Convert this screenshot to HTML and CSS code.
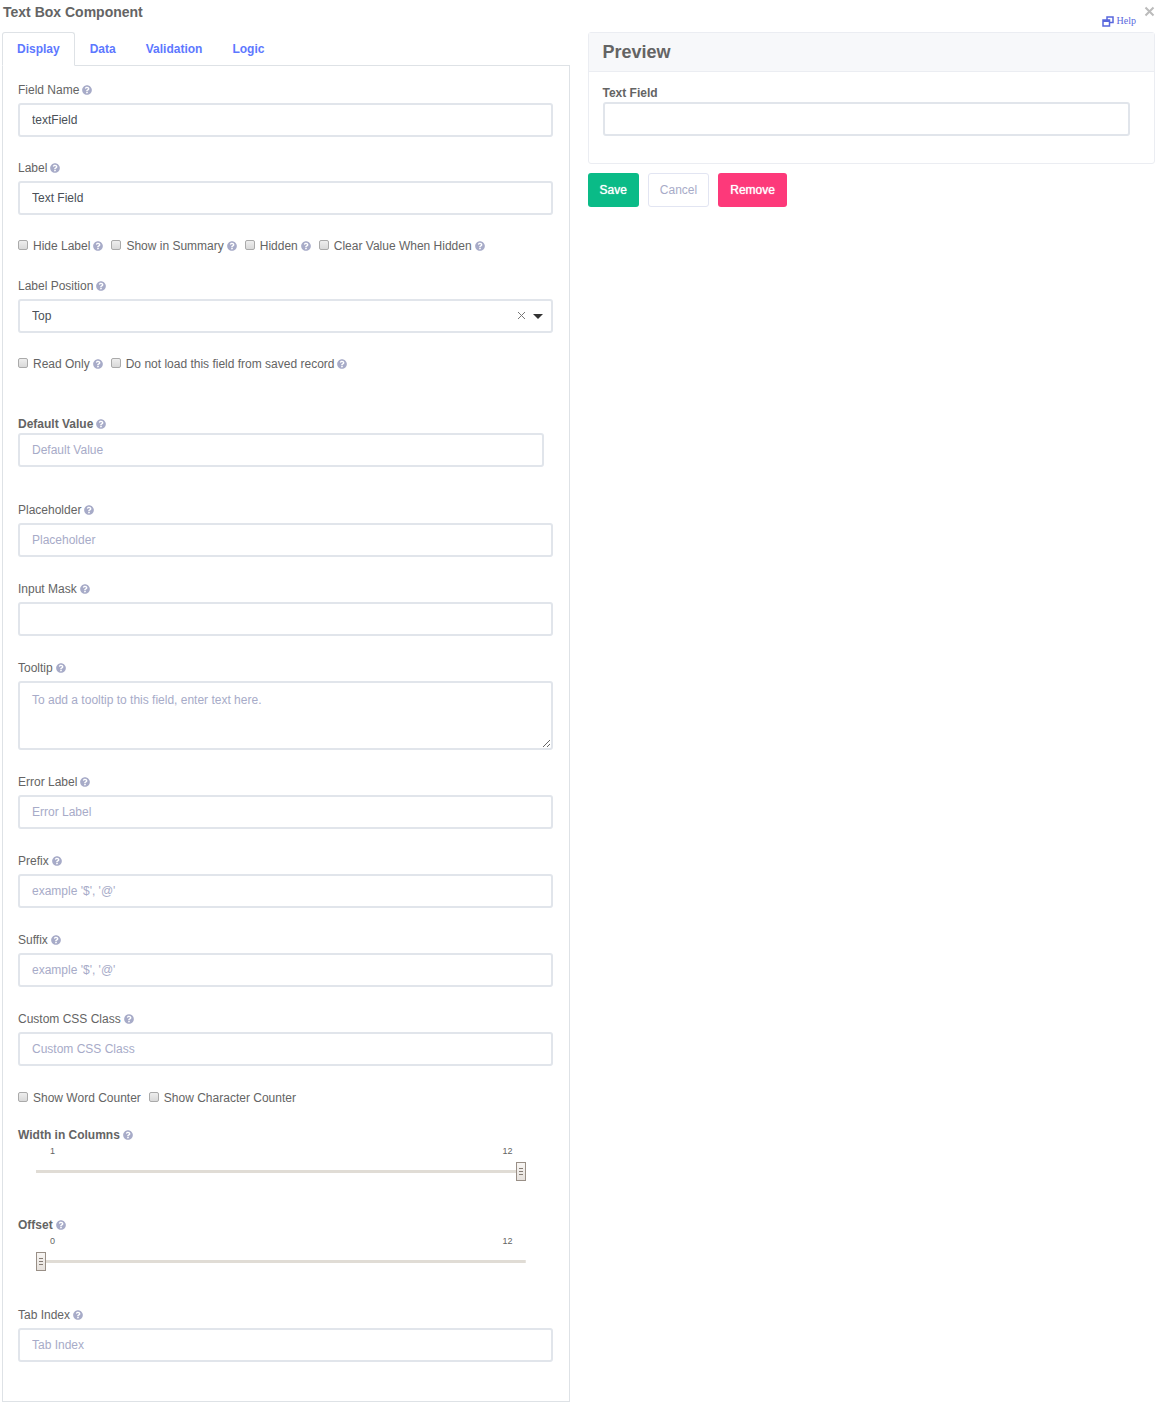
FILE: index.html
```html
<!DOCTYPE html>
<html lang="en">

<head>
    <meta charset="UTF-8">
    <meta name="viewport" content="width=device-width, initial-scale=1.0">
    <title>Text Box Component</title>
    <link rel="stylesheet" href="styles.css">
</head>

<body>
    <svg class="sprite" aria-hidden="true">
        <symbol id="question" viewBox="0 0 512 512">
            <path d="M504 256c0 136.997-111.043 248-248 248S8 392.997 8 256C8 119.083 119.043 8 256 8s248 111.083 248 248zM262.655 90c-54.497 0-89.255 22.957-116.549 63.758-3.536 5.286-2.353 12.415 2.715 16.258l34.699 26.31c5.205 3.947 12.621 3.008 16.665-2.122 17.864-22.658 30.113-35.797 57.303-35.797 20.429 0 45.698 13.148 45.698 32.958 0 14.976-12.363 22.667-32.534 33.976C247.128 238.528 216 254.941 216 296v4c0 6.627 5.373 12 12 12h56c6.627 0 12-5.373 12-12v-1.333c0-28.462 83.186-29.647 83.186-106.667 0-58.002-60.165-102-116.531-102zM256 338c-25.365 0-46 20.635-46 46 0 25.364 20.635 46 46 46s46-20.636 46-46c0-25.364-20.635-46-46-46z" />
        </symbol>
    </svg>

    <header class="dialog-header">
        <h1>Text Box Component</h1>
        <a href="#" class="help-link">
            <svg viewBox="0 0 12 11" width="12" height="11" aria-hidden="true">
                <path d="M5 3.500V1h6v5.500H8M1 4h6.500v6H1zM1 5.200h6" />
            </svg>
            Help
        </a>
        <button type="button" class="close" aria-label="Close">
            <svg viewBox="0 0 11 11" width="11" height="11" aria-hidden="true">
                <path d="M1.500 1.500l8 8M9.500 1.500l-8 8" />
            </svg>
        </button>
    </header>

    <main class="columns">
        <section class="settings">
            <nav class="tabs">
                <a href="#" class="tab active">Display</a>
                <a href="#" class="tab">Data</a>
                <a href="#" class="tab">Validation</a>
                <a href="#" class="tab">Logic</a>
            </nav>
            <form class="panel">
                <div class="group">
                    <div class="field">
                        <label for="field-name">Field Name <svg class="tip"><use href="#question" /></svg></label>
                        <input type="text" class="control" id="field-name" value="textField">
                    </div>
                    <div class="field">
                        <label for="label">Label <svg class="tip"><use href="#question" /></svg></label>
                        <input type="text" class="control" id="label" value="Text Field">
                    </div>
                    <div class="checks">
                        <label><input type="checkbox">Hide Label <svg class="tip"><use href="#question" /></svg></label>
                        <label><input type="checkbox">Show in Summary <svg class="tip"><use href="#question" /></svg></label>
                        <label><input type="checkbox">Hidden <svg class="tip"><use href="#question" /></svg></label>
                        <label><input type="checkbox">Clear Value When Hidden <svg class="tip"><use href="#question" /></svg></label>
                    </div>
                    <div class="field">
                        <label for="label-position">Label Position <svg class="tip"><use href="#question" /></svg></label>
                        <div class="select">
                            <select class="control" id="label-position">
                                <option>Top</option>
                                <option>Left</option>
                                <option>Right</option>
                                <option>Bottom</option>
                            </select>
                            <button type="button" class="clear" aria-label="Clear selection">
                                <svg viewBox="0 0 9 9" width="9" height="9" aria-hidden="true">
                                    <path d="M1 1l7 7M8 1l-7 7" />
                                </svg>
                            </button>
                            <span class="caret"></span>
                        </div>
                    </div>
                    <div class="checks">
                        <label><input type="checkbox">Read Only <svg class="tip"><use href="#question" /></svg></label>
                        <label><input type="checkbox">Do not load this field from saved record <svg class="tip"><use href="#question" /></svg></label>
                    </div>
                </div>

                <div class="field compact default-value">
                    <label for="default-value">Default Value <svg class="tip"><use href="#question" /></svg></label>
                    <input type="text" class="control" id="default-value" placeholder="Default Value">
                </div>

                <div class="group loose">
                    <div class="field">
                        <label for="placeholder">Placeholder <svg class="tip"><use href="#question" /></svg></label>
                        <input type="text" class="control" id="placeholder" placeholder="Placeholder">
                    </div>
                    <div class="field">
                        <label for="input-mask">Input Mask <svg class="tip"><use href="#question" /></svg></label>
                        <input type="text" class="control" id="input-mask">
                    </div>
                    <div class="field">
                        <label for="tooltip">Tooltip <svg class="tip"><use href="#question" /></svg></label>
                        <textarea class="control" id="tooltip" placeholder="To add a tooltip to this field, enter text here."></textarea>
                    </div>
                    <div class="field">
                        <label for="error-label">Error Label <svg class="tip"><use href="#question" /></svg></label>
                        <input type="text" class="control" id="error-label" placeholder="Error Label">
                    </div>
                    <div class="field">
                        <label for="prefix">Prefix <svg class="tip"><use href="#question" /></svg></label>
                        <input type="text" class="control" id="prefix" placeholder="example '$', '@'">
                    </div>
                    <div class="field">
                        <label for="suffix">Suffix <svg class="tip"><use href="#question" /></svg></label>
                        <input type="text" class="control" id="suffix" placeholder="example '$', '@'">
                    </div>
                    <div class="field">
                        <label for="css-class">Custom CSS Class <svg class="tip"><use href="#question" /></svg></label>
                        <input type="text" class="control" id="css-class" placeholder="Custom CSS Class">
                    </div>
                    <div class="checks">
                        <label><input type="checkbox">Show Word Counter</label>
                        <label><input type="checkbox">Show Character Counter</label>
                    </div>
                </div>

                <div class="sliders">
                    <div class="field compact">
                        <label for="width">Width in Columns <svg class="tip"><use href="#question" /></svg></label>
                        <div class="ticks"><span>1</span><span>12</span></div>
                        <input type="range" class="slider" id="width" min="1" max="12" value="12">
                    </div>
                    <div class="field compact">
                        <label for="offset">Offset <svg class="tip"><use href="#question" /></svg></label>
                        <div class="ticks"><span>0</span><span>12</span></div>
                        <input type="range" class="slider" id="offset" min="0" max="12" value="0">
                    </div>
                    <div class="field">
                        <label for="tab-index">Tab Index <svg class="tip"><use href="#question" /></svg></label>
                        <input type="text" class="control" id="tab-index" placeholder="Tab Index">
                    </div>
                </div>
            </form>
        </section>

        <aside>
            <div class="card">
                <h2>Preview</h2>
                <div class="card-body field compact">
                    <label for="preview-field">Text Field</label>
                    <input type="text" class="control" id="preview-field">
                </div>
            </div>
            <div class="actions">
                <button type="button" class="btn save">Save</button>
                <button type="button" class="btn cancel">Cancel</button>
                <button type="button" class="btn remove">Remove</button>
            </div>
        </aside>
    </main>
</body>

</html>
```
FILE: styles.css
```css
* {
    box-sizing: border-box;
}

body {
    margin: 0;
    padding: 0 5px 14px 2px;
    font-family: Arial, "Liberation Sans", sans-serif;
    font-size: 12px;
    line-height: 18px;
    color: #646464;
    background: #fff;
}

.sprite {
    display: none;
}

/* Header */
.dialog-header {
    display: flex;
    align-items: flex-start;
    height: 32px;
}

h1 {
    margin: 3px auto 0 1px;
    font-size: 14px;
    line-height: 18px;
}

.help-link {
    display: flex;
    align-items: center;
    gap: 3px;
    margin: 12px 8px 0 0;
    font-family: "Liberation Serif", serif;
    font-size: 10px;
    color: #5867dd;
    text-decoration: none;
}

.help-link svg,
.close svg,
.clear svg {
    display: block;
    fill: none;
    stroke: currentColor;
}

.help-link svg {
    stroke-width: 1.5;
}

.close,
.clear {
    padding: 0;
    border: 0;
    background: none;
    cursor: pointer;
}

.close {
    margin-top: 6px;
    color: #bbb;
}

.close svg {
    stroke-width: 2;
}

/* Layout */
.columns {
    display: grid;
    grid-template-columns: 1fr 1fr;
    gap: 18px;
    align-items: start;
}

/* Tabs */
.tabs {
    display: flex;
    border-bottom: 1px solid #dee2e6;
}

.tab {
    margin-bottom: -1px;
    padding: 8px 15px;
    font-weight: bold;
    color: #5d78ff;
    text-decoration: none;
}

.tab.active {
    padding: 7px 14px;
    border: 1px solid #dee2e6;
    border-bottom-color: #fff;
    border-radius: 3px 3px 0 0;
    background: #fff;
}

.panel {
    padding: 15px 16px 39px 15px;
    border: 1px solid #dee2e6;
    border-top: 0;
}

/* Form fields */
.group {
    display: flex;
    flex-direction: column;
    gap: 22px;
}

.group.loose {
    gap: 23px;
}

.field {
    display: flex;
    flex-direction: column;
    gap: 4px;
}

.field.compact {
    gap: 0;
}

.field.compact label {
    font-weight: bold;
}

.default-value {
    margin: 42px 9px 34px 0;
}

label {
    display: flex;
    align-items: center;
    gap: 3px;
}

.tip {
    width: 10px;
    height: 10px;
    fill: #a7abc8;
}

.control {
    width: 100%;
    height: 34px;
    padding: 0 12px;
    border: 2px solid #e1e5eb;
    border-radius: 3px;
    font: inherit;
    color: #495057;
    background: #fff;
}

.control::placeholder {
    color: #a7abc8;
}

.control:focus {
    outline: none;
    border-color: #9aabff;
}

textarea.control {
    display: block;
    height: 69px;
    padding-top: 8px;
}

.select {
    position: relative;
}

.select .control {
    display: block;
    appearance: none;
}

/* Clear button and arrow sit over the select */
.clear {
    position: absolute;
    top: 12px;
    right: 27px;
    color: #777;
}

.caret {
    position: absolute;
    top: 15px;
    right: 10px;
    border: 5px solid transparent;
    border-top-color: #333;
    border-bottom: 0;
    pointer-events: none;
}

.checks {
    display: flex;
    flex-wrap: wrap;
    gap: 8px;
}

.checks input {
    appearance: none;
    width: 10px;
    height: 10px;
    margin: 0 2px 3px 0;
    border: 1px solid #aaa;
    border-radius: 2px;
    background: linear-gradient(#eee, #d9d9d9);
}

.checks input:checked {
    background: #5d78ff;
}

/* Sliders */
.sliders {
    display: flex;
    flex-direction: column;
    gap: 35px;
    margin-top: 19px;
}

.ticks {
    display: flex;
    justify-content: space-between;
    margin: 0 40px 3px 32px;
    font-size: 9px;
    line-height: 14px;
}

.slider {
    appearance: none;
    height: 20px;
    margin: 0 27px 0 18px;
    background: linear-gradient(#e0dcd5, #e0dcd5) center / 100% 3px no-repeat;
}

.slider::-webkit-slider-thumb {
    appearance: none;
    width: 10px;
    height: 19px;
    border: 1px solid #998f86;
    background:
        linear-gradient(#857c74, #857c74) 2px 5px / 4px 1px no-repeat,
        linear-gradient(#857c74, #857c74) 2px 8px / 4px 1px no-repeat,
        linear-gradient(#857c74, #857c74) 2px 11px / 4px 1px no-repeat,
        linear-gradient(#f8f6f4, #e6e1dc);
}

/* Preview */
.card {
    border: 1px solid #ebedf2;
    border-radius: 3px;
}

h2 {
    margin: 0;
    padding: 8px 14px 7px;
    border-bottom: 1px solid #ebedf2;
    font-size: 18px;
    line-height: 23px;
    background: #f7f8fa;
}

.card-body {
    padding: 12px 24px 27px 14px;
}

.actions {
    display: flex;
    gap: 9px;
    margin-top: 9px;
}

.btn {
    height: 34px;
    padding: 0 11px;
    border: 1px solid transparent;
    border-radius: 3px;
    font: inherit;
    color: #fff;
    cursor: pointer;
}

.save {
    background: #0abb87;
    text-shadow: 0 0 1px #fff;
}

.cancel {
    border-color: #e2e5f2;
    color: #a7abc8;
    background: #fff;
}

.remove {
    background: #fd397a;
    text-shadow: 0 0 1px #fff;
}
```
